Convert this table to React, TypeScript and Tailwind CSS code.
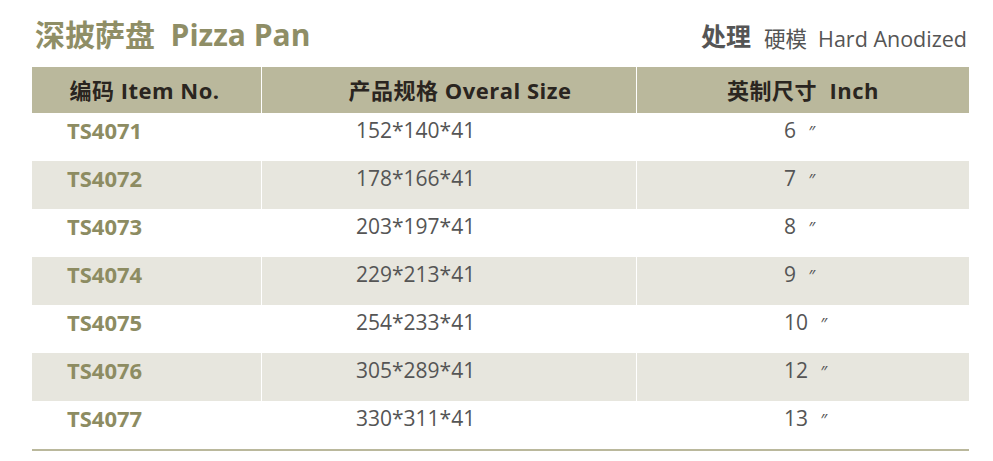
import React from "react";

const rows = [
  ["TS4071", "152*140*41", "6"],
  ["TS4072", "178*166*41", "7"],
  ["TS4073", "203*197*41", "8"],
  ["TS4074", "229*213*41", "9"],
  ["TS4075", "254*233*41", "10"],
  ["TS4076", "305*289*41", "12"],
  ["TS4077", "330*311*41", "13"],
];

const font = { fontFamily: '"Open Sans", "Noto Sans CJK SC", sans-serif' };

export default function App() {
  return (
    <div className="w-[993px] h-[461px] bg-white overflow-hidden" style={font}>
      <div className="flex items-end justify-between h-[50px] pl-[35px] pr-[26px]">
        <div className="text-[30px] font-bold text-[#8f8e66] leading-none whitespace-pre">
          深披萨盘  Pizza Pan
        </div>
        <div className="flex items-end text-[#555] leading-none pb-[1px]">
          <span className="text-[25px] font-bold">处理</span>
          <span className="text-[21.5px] ml-[13px] whitespace-pre">硬模  Hard Anodized</span>
        </div>
      </div>
      <div className="ml-[32px] mt-[17px] w-[937px]">
        <div className="grid grid-cols-[229px_374px_332px] gap-x-px h-[46px] text-[22px] font-bold text-[#2a2520] tracking-[0.5px]">
          <div className="bg-[#bab89c] flex items-center justify-center pr-[4px]">编码 Item No.</div>
          <div className="bg-[#bab89c] flex items-center justify-center pl-[22px]">产品规格 Overal Size</div>
          <div className="bg-[#bab89c] flex items-center justify-center whitespace-pre">英制尺寸  Inch</div>
        </div>
        {rows.map((r, i) => (
          <div
            key={r[0]}
            className="grid grid-cols-[229px_374px_332px] gap-x-px h-[48px]"
          >
            <div className={`${i % 2 ? "bg-[#e7e6de]" : "bg-white"} pl-[35px] pt-[1px] text-[22px] font-bold text-[#8d8c62]`}>
              {r[0]}
            </div>
            <div className={`${i % 2 ? "bg-[#e7e6de]" : "bg-white"} pl-[94px] pt-[2px] text-[21px] text-[#555]`}>
              {r[1]}
            </div>
            <div className={`${i % 2 ? "bg-[#e7e6de]" : "bg-white"} pl-[147px] pt-[2px] text-[21px] text-[#555] whitespace-pre`}>
              {r[2]}
              <span className="ml-[12px] text-[17px] italic">″</span>
            </div>
          </div>
        ))}
        <div className="h-[2px] bg-[#bab89c]" />
      </div>
    </div>
  );
}
